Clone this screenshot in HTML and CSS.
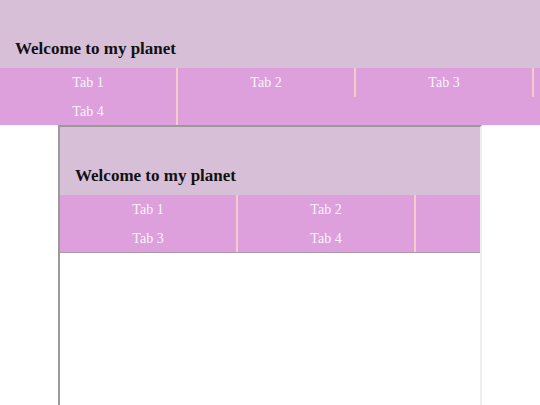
FILE: index.html
```html
<!DOCTYPE html>
<html>
<head>
<meta charset="utf-8">
<link rel="stylesheet" href="styles.css">
</head>
<body>
<div class="page">
  <header class="header"><h1 class="title">Welcome to my planet</h1></header>
  <nav class="tabs">
    <div class="tab">Tab 1</div>
    <div class="tab">Tab 2</div>
    <div class="tab">Tab 3</div>
    <div class="tab">Tab 4</div>
  </nav>
  <div class="frame">
    <header class="header"><h1 class="title">Welcome to my planet</h1></header>
    <nav class="tabs">
      <div class="tab">Tab 1</div>
      <div class="tab">Tab 2</div>
      <div class="tab">Tab 3</div>
      <div class="tab">Tab 4</div>
    </nav>
    <div class="nested"></div>
  </div>
</div>
</body>
</html>
```
FILE: styles.css
```css
html, body {
  margin: 0;
  padding: 0;
  background: #ffffff;
  font-family: "Liberation Serif", "Times New Roman", serif;
}
.page {
  width: 540px;
  height: 405px;
  overflow: hidden;
}
.header {
  height: 68px;
  background: #d8bfd8;
  display: flex;
  align-items: flex-end;
  padding: 0 15px 9px;
  box-sizing: border-box;
}
.title {
  margin: 0;
  font-size: 17px;
  line-height: 20px;
  font-weight: bold;
  color: #111;
}
.tabs {
  display: flex;
  flex-wrap: wrap;
  background: #dda0dd;
}
.tab {
  width: 176px;
  border-right: 2px solid #f4cdc6;
  text-align: center;
  color: #fcf4fc;
  font-size: 14px;
  line-height: 26.5px;
  padding-top: 2px;
}
.frame {
  width: 420px;
  height: 300px;
  margin: 0 auto;
  border-style: solid;
  border-width: 2px;
  border-color: #9a9a9a #eeeeee #eeeeee #9a9a9a;
  overflow: hidden;
}
.nested {
  border-top: 1px solid #a898a8;
  height: 100px;
}
```
